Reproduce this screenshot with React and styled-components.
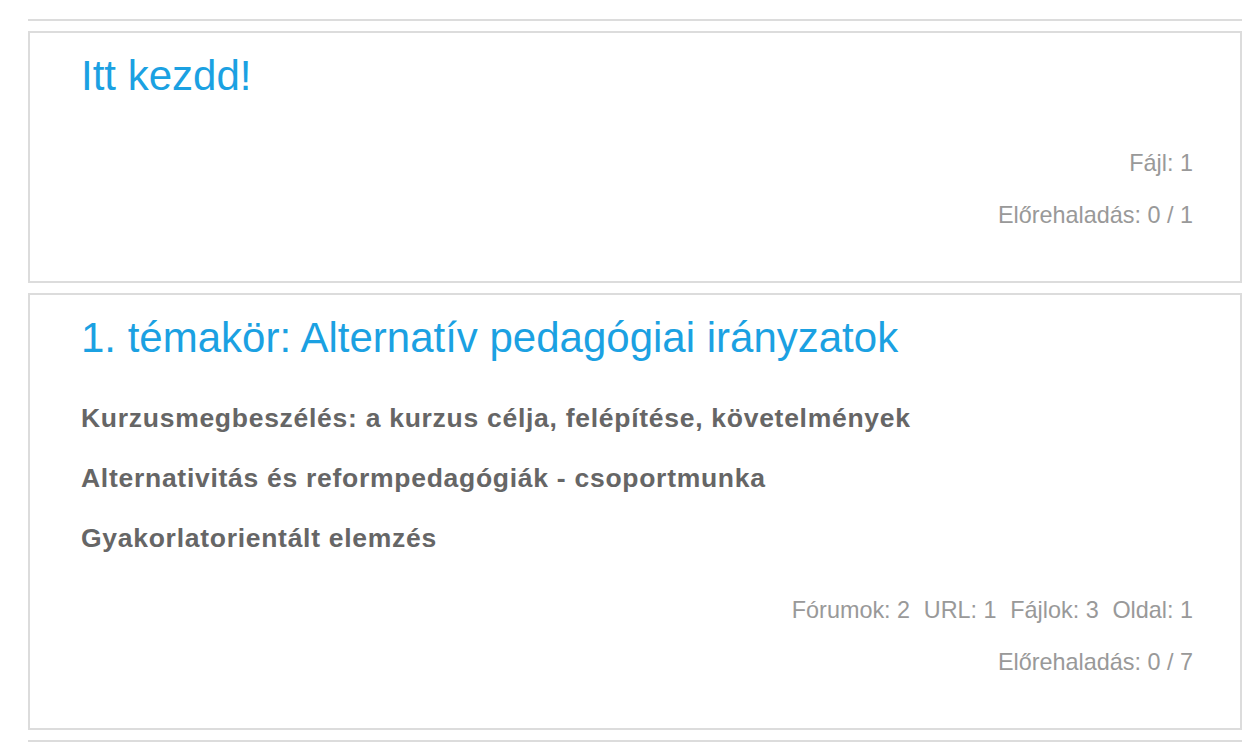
import React from "react";
import styled, { createGlobalStyle } from "styled-components";

const GlobalStyle = createGlobalStyle`
  html, body { margin: 0; padding: 0; background: #ffffff; }
  body { font-family: "Liberation Sans", Arial, sans-serif; }
`;

const Page = styled.div`
  padding: 19px 18px 0 28px;
`;

const SectionList = styled.ul`
  list-style: none;
  margin: 0;
  padding: 10px 0;
  border-top: 2px solid #dcdcdc;
  border-bottom: 2px solid #dcdcdc;
  display: flex;
  flex-direction: column;
  gap: 10px;
`;

const Section = styled.li`
  border: 2px solid #dcdcdc;
  padding: 18px 47px 0 51px;
  min-height: ${(p) => p.$minHeight}px;
  box-sizing: border-box;
`;

const Title = styled.h3`
  margin: 0;
  font-size: 42px;
  line-height: 1.2;
  font-weight: 400;
  color: #1ba1e2;
`;

const Activities = styled.ul`
  list-style: none;
  margin: 25px 0 0;
  padding: 0;
  display: flex;
  flex-direction: column;
`;

const Activity = styled.li`
  font-size: 26.5px;
  letter-spacing: 0.72px;
  line-height: 60px;
  font-weight: 700;
  color: #666666;
`;

const Summary = styled.div`
  display: flex;
  flex-direction: column;
  align-items: flex-end;
  margin-top: ${(p) => p.$top}px;
`;

const SummaryRow = styled.div`
  display: flex;
  gap: 13.7px;
  font-size: 23.4px;
  line-height: 52px;
  color: #999999;
`;

const sections = [
  {
    title: "Itt kezdd!",
    activities: [],
    counts: ["Fájl: 1"],
    progress: "Előrehaladás: 0 / 1",
    minHeight: 252,
    top: 36,
  },
  {
    title: "1. témakör: Alternatív pedagógiai irányzatok",
    activities: [
      "Kurzusmegbeszélés: a kurzus célja, felépítése, követelmények",
      "Alternativitás és reformpedagógiák - csoportmunka",
      "Gyakorlatorientált elemzés",
    ],
    counts: ["Fórumok: 2", "URL: 1", "Fájlok: 3", "Oldal: 1"],
    progress: "Előrehaladás: 0 / 7",
    minHeight: 437,
    top: 16,
  },
];

export default function App() {
  return (
    <>
      <GlobalStyle />
      <Page>
        <SectionList>
          {sections.map((s) => (
            <Section key={s.title} $minHeight={s.minHeight}>
              <Title>{s.title}</Title>
              {s.activities.length > 0 && (
                <Activities>
                  {s.activities.map((a) => (
                    <Activity key={a}>{a}</Activity>
                  ))}
                </Activities>
              )}
              <Summary $top={s.top}>
                <SummaryRow>
                  {s.counts.map((c) => (
                    <span key={c}>{c}</span>
                  ))}
                </SummaryRow>
                <SummaryRow>{s.progress}</SummaryRow>
              </Summary>
            </Section>
          ))}
        </SectionList>
      </Page>
    </>
  );
}
